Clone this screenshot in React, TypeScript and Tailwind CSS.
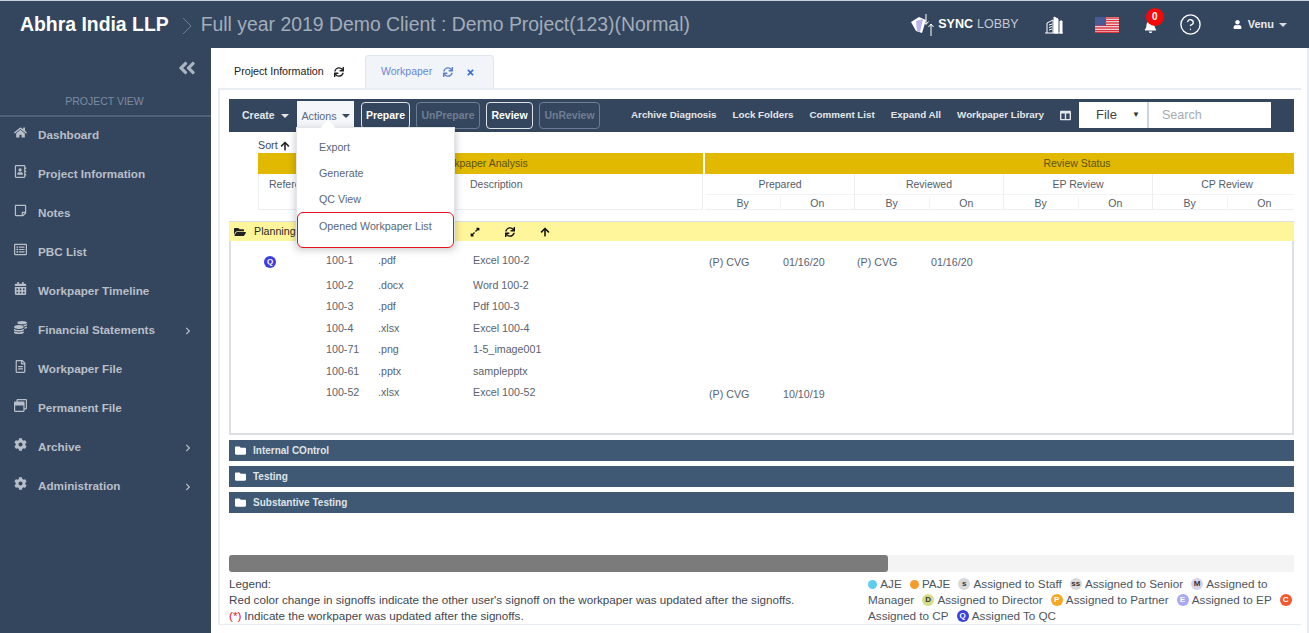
import {
  FaAngleDoubleLeft,
  FaArrowUp,
  FaBell,
  FaCalendarAlt,
  FaChevronRight,
  FaCoins,
  FaCog,
  FaColumns,
  FaExpandAlt,
  FaFolder,
  FaFolderOpen,
  FaHome,
  FaRegAddressBook,
  FaRegFileAlt,
  FaRegListAlt,
  FaRegStickyNote,
  FaRegWindowRestore,
  FaSync,
  FaTimes,
  FaUser,
} from "react-icons/fa"
import { CircleHelp } from "lucide-react"
import type { ReactNode } from "react"

const navItems = [
  { label: "Dashboard", icon: <FaHome /> },
  { label: "Project Information", icon: <FaRegAddressBook /> },
  { label: "Notes", icon: <FaRegStickyNote /> },
  { label: "PBC List", icon: <FaRegListAlt /> },
  { label: "Workpaper Timeline", icon: <FaCalendarAlt /> },
  { label: "Financial Statements", icon: <FaCoins />, arrow: true },
  { label: "Workpaper File", icon: <FaRegFileAlt /> },
  { label: "Permanent File", icon: <FaRegWindowRestore /> },
  { label: "Archive", icon: <FaCog />, arrow: true },
  { label: "Administration", icon: <FaCog />, arrow: true },
]

const rows = [
  { ref: "100-1", ext: ".pdf", desc: "Excel 100-2", q: true, by: "(P) CVG", on: "01/16/20", rby: "(P) CVG", ron: "01/16/20" },
  { ref: "100-2", ext: ".docx", desc: "Word 100-2" },
  { ref: "100-3", ext: ".pdf", desc: "Pdf 100-3" },
  { ref: "100-4", ext: ".xlsx", desc: "Excel 100-4" },
  { ref: "100-71", ext: ".png", desc: "1-5_image001" },
  { ref: "100-61", ext: ".pptx", desc: "samplepptx" },
  { ref: "100-52", ext: ".xlsx", desc: "Excel 100-52", by: "(P) CVG", on: "10/10/19" },
]

function Caret({ className = "border-t-white" }: { className?: string }) {
  return <span className={`inline-block w-0 h-0 border-x-4 border-x-transparent border-t-4 ${className}`} />
}

function Badge({ letter, className }: { letter: string; className: string }) {
  return (
    <span className={`inline-flex items-center justify-center w-3 h-3 rounded-full text-[8px] font-bold leading-none ${className}`}>
      {letter}
    </span>
  )
}

function Sidebar() {
  return (
    <aside className="w-[211px] shrink-0 bg-[#34465e] flex flex-col">
      <div className="h-[35px] flex items-center justify-end pr-[14px] pt-[4px] text-[#aab4c1] text-[20px]">
        <FaAngleDoubleLeft />
      </div>
      <div className="h-[34px] border-b-2 border-[#4d6079] text-center text-[10.500px] text-[#7c8ca1] pt-[12px] pr-[2px] leading-[13px]">
        PROJECT VIEW
      </div>
      <nav>
        {navItems.map((item) => (
          <div key={item.label} className="h-[39px] flex items-center pl-[13px] pb-[3px] text-[#b9bfc8] relative">
            <span className="w-[14px] text-[13px] -mt-[6px] flex justify-center">{item.icon}</span>
            <span className="ml-[11px] text-[11.700px] font-bold">{item.label}</span>
            {item.arrow && <FaChevronRight className="absolute left-[184px] top-[15px] text-[8px]" />}
          </div>
        ))}
      </nav>
    </aside>
  )
}

function Header() {
  return (
    <header className="h-[48px] shrink-0 bg-[#34465e] border-t border-[#c9d0d9] flex items-center text-white">
      <div className="ml-[20px] text-[19.400px] font-bold">Abhra India LLP</div>
      <svg className="ml-[13px] mt-[2px]" width="10" height="18" viewBox="0 0 10 18" fill="none" stroke="#6f7f93">
        <path d="M1 1l8 8-8 8" />
      </svg>
      <div className="ml-[9px] text-[19.400px] text-[#a3adb9]">Full year 2019 Demo Client : Demo Project(123)(Normal)</div>
      <div className="ml-auto flex items-center">
        <svg width="26" height="22" viewBox="0 0 26 22">
          <path d="M1 8l8-5 7 3-4 13-6-2z" fill="#fff" />
          <path d="M6 7l7-2-3 13-3-1z" fill="#b9b4ee" />
          <path d="M16 0v10M13.5 7.5l2.5 3 2.5-3M21 22v-12M18.5 13l2.5-3 2.5 3" stroke="#fff" fill="none" />
        </svg>
        <span className="ml-[2px] text-[12.500px] font-bold">SYNC</span>
        <span className="ml-[4px] text-[12.500px] text-[#c3c9d1] font-light">LOBBY</span>
        <svg className="ml-[25px]" width="20" height="18" viewBox="0 0 20 18" fill="none" stroke="#fff">
          <path d="M1 17h18M3 17V7l6-3v13M5 9l3-1M5 11.500l3-1M5 14l3-1" />
          <path d="M10 17V1l4 2v14zM16 17V5h2v12z" fill="#fff" />
        </svg>
        <svg className="ml-[31px]" width="24" height="16" viewBox="0 0 24 16">
          <rect width="24" height="16" fill="#fff" />
          <path d="M0 1h24M0 3.500h24M0 6h24M0 8.500h24M0 11h24M0 13.500h24M0 15.500h24" stroke="#d8343f" strokeWidth="1.300" />
          <rect width="11" height="8.500" fill="#4a5a94" />
        </svg>
        <div className="ml-[25px] relative w-[14px] h-[16px] mt-[6px]">
          <FaBell className="text-[13px]" />
          <span className="absolute -top-[12px] left-[2px] w-[18px] h-[18px] rounded-full bg-[#f50808] text-[10px] font-bold flex items-center justify-center">
            0
          </span>
        </div>
        <CircleHelp className="ml-[21px] w-[23px] h-[23px]" strokeWidth={1.400} />
        <FaUser className="ml-[31px] text-[9px]" />
        <span className="ml-[6px] text-[11px] font-bold text-[#e6e9ed]">Venu</span>
        <Caret className="ml-[5px] mr-[22px] border-t-[#d8dce2]" />
      </div>
    </header>
  )
}

function Tabs() {
  return (
    <div className="h-[40px] flex items-end pl-[1px]">
      <div className="w-[146px] h-[33px] pl-[15px] flex items-center text-[10.700px] text-[#222]">
        Project Information
        <FaSync className="ml-[10px] text-[10px] text-[#222]" />
      </div>
      <div className="w-[129px] h-[33px] rounded-t-[4px] border border-b-0 border-[#e0e6ee] bg-[#f1f5f9] pl-[15px] flex items-center text-[10.500px] text-[#6a86d8]">
        Workpaper
        <FaSync className="ml-[11px] text-[10px] text-[#5b7fd2]" />
        <FaTimes className="ml-[13px] text-[9px] text-[#3f6fd0]" />
      </div>
    </div>
  )
}

function OutlineBtn({ label, width, off }: { label: string; width: string; off?: boolean }) {
  return (
    <div
      className={`h-[27px] rounded-[4px] border flex items-center justify-center text-[10.500px] font-bold ${width} ${
        off ? "border-[#6d7c90] text-[#6f7e92]" : "border-[#dfe3e8] text-white"
      }`}
    >
      {label}
    </div>
  )
}

function Toolbar() {
  return (
    <div className="h-[33px] bg-[#34465e] flex pt-[3px] relative text-[9.800px]">
      <div className="w-[68px] pl-[13px] h-[27px] flex items-center font-bold text-[#e3e6ea] text-[10.500px]">
        Create
        <Caret className="ml-[6px]" />
      </div>
      <div className="w-[57px] h-[30px] bg-[#f4f6f9] flex items-center justify-center text-[#5a6a80] -mt-[1px] text-[10.700px]">
        Actions
        <Caret className="ml-[5px] border-t-[#34465e]" />
      </div>
      <div className="ml-[7px] flex gap-[6px]">
        <OutlineBtn label="Prepare" width="w-[49px]" />
        <OutlineBtn label="UnPrepare" width="w-[64px]" off />
        <OutlineBtn label="Review" width="w-[47px]" />
        <OutlineBtn label="UnReview" width="w-[61px]" off />
      </div>
      <div className="ml-[31px] h-[27px] flex items-center gap-[16px] font-bold text-[#e3e6ea]">
        <span>Archive Diagnosis</span>
        <span>Lock Folders</span>
        <span>Comment List</span>
        <span>Expand All</span>
        <span>Workpaper Library</span>
        <FaColumns className="text-[11px]" />
      </div>
      <div className="absolute left-[850px] top-[3px] flex h-[26px]">
        <div className="w-[70px] bg-white border-r-2 border-[#c8d7e6] pl-[17px] pr-[7px] flex items-center justify-between text-[13px] text-[#444]">
          File
          <span className="text-[8px] text-[#333]">▼</span>
        </div>
        <div className="w-[122px] bg-white pl-[13px] flex items-center text-[12.500px] text-[#a5abb3]">Search</div>
      </div>
    </div>
  )
}

function ActionsMenu() {
  return (
    <div className="absolute left-[67px] top-[28px] w-[159px] h-[119px] bg-white border border-[#e2e6eb] shadow-[0_3px_8px_rgba(0,0,0,0.25)] text-[10.700px] text-[#5a6778] z-10">
      <div className="absolute -top-[6px] left-[26px] w-[10px] h-[10px] rotate-45 bg-white" />
      <div className="relative pt-[6px]">
        <div className="h-[26px] pl-[22px] flex items-center">Export</div>
        <div className="h-[26px] pl-[22px] flex items-center">Generate</div>
        <div className="h-[26px] pl-[22px] flex items-center">QC View</div>
      </div>
      <div className="h-[36px] border-[1.500px] border-[#e4121d] rounded-[6px] pl-[21px] pb-[8px] flex items-center bg-white">
        Opened Workpaper List
      </div>
    </div>
  )
}

function ColumnHeaders() {
  const groups = ["Prepared", "Reviewed", "EP Review", "CP Review"]
  return (
    <div className="ml-[29px] flex gap-[2px] text-[10.500px] text-[#555d68]">
      <div className="w-[445px] h-[57px] border border-t-0 border-[#eceff2]">
        <div className="h-[21px] bg-[#e0b900] flex items-center justify-center pl-[2px] -mx-[1px] text-[#5e5216]">Workpaper Analysis</div>
        <div className="flex pt-[3px]">
          <div className="w-[211px] pl-[10px]">Reference</div>
          <div>Description</div>
        </div>
      </div>
      <div className="w-[589px] overflow-hidden">
        <div className="w-[744px] h-[21px] bg-[#e0b900] flex items-center justify-center text-[#5e5216]">Review Status</div>
        <div className="flex w-[600px] h-[36px] pl-[1px] border-b border-[#eceff2]">
          {groups.map((g) => (
            <div key={g} className="w-[149px] shrink-0 border-r border-[#eceff2]">
              <div className="h-[19px] mt-[2px] border-b border-[#f1f3f5] flex items-center justify-center">{g}</div>
              <div className="flex h-[15px] pt-[2px]">
                <div className="flex-1 flex items-center justify-center border-r border-[#f1f3f5]">By</div>
                <div className="flex-1 flex items-center justify-center">On</div>
              </div>
            </div>
          ))}
        </div>
      </div>
    </div>
  )
}

function WorkpaperRows() {
  return (
    <div className="h-[194px] border-x-2 border-b-2 border-[#dcdfe3] pt-[6px] text-[10.700px] text-[#5a6270]">
      {rows.map((r, i) => (
        <div key={r.ref} className={`flex ${i === 0 ? "h-[25.500px] pt-[5px]" : "h-[21.400px] pt-[4.500px]"}`}>
          <div className="w-[95px] pl-[33px]">{r.q && <Badge letter="Q" className="bg-[#3c3fe0] text-white -mt-[1px]" />}</div>
          <div className="w-[52px]">{r.ref}</div>
          <div className="w-[95px]">{r.ext}</div>
          <div className="w-[236px]">{r.desc}</div>
          <div className="w-[74px] pt-[2px]">{r.by}</div>
          <div className="w-[74px] pt-[2px]">{r.on}</div>
          <div className="w-[74px] pt-[2px]">{r.rby}</div>
          <div className="w-[74px] pt-[2px]">{r.ron}</div>
        </div>
      ))}
    </div>
  )
}

function FolderBar({ label }: { label: string }) {
  return (
    <div className="h-[21px] bg-[#3f5873] flex items-center pl-[6px] text-[10px] font-bold text-[#dfe4ea]">
      <FaFolder className="text-[11px] text-white mr-[7px]" />
      {label}
    </div>
  )
}

function LegendRow({ children }: { children: ReactNode }) {
  return <div className="h-[16px] flex items-center whitespace-nowrap">{children}</div>
}

function Legend() {
  return (
    <div className="flex mt-[4px] text-[11.650px] text-[#3f4650]">
      <div className="w-[639px]">
        <LegendRow>Legend:</LegendRow>
        <LegendRow>Red color change in signoffs indicate the other user's signoff on the workpaper was updated after the signoffs.</LegendRow>
        <LegendRow>
          <span className="text-[#e4121d] mr-[3px]">(*)</span>Indicate the workpaper was updated after the signoffs.
        </LegendRow>
      </div>
      <div className="flex-1 text-[#4d5560] text-[11.700px]">
        <LegendRow>
          <Badge letter="" className="bg-[#5fcdf0] !w-[9px] !h-[9px]" />&nbsp;AJE
          <Badge letter="" className="bg-[#f79b2e] !w-[9px] !h-[9px] ml-[8px]" />&nbsp;PAJE
          <Badge letter="s" className="bg-[#d9d9d9] text-[#333] ml-[8px]" />&nbsp;Assigned to Staff
          <Badge letter="ss" className="bg-[#d9d9d9] text-[#333] ml-[8px]" />&nbsp;Assigned to Senior
          <Badge letter="M" className="bg-[#d5d3ee] text-[#333] ml-[8px]" />&nbsp;Assigned to
        </LegendRow>
        <LegendRow>
          Manager
          <Badge letter="D" className="bg-[#d7dc8a] text-[#333] ml-[8px]" />&nbsp;Assigned to Director
          <Badge letter="P" className="bg-[#f7a823] text-white ml-[8px]" />&nbsp;Assigned to Partner
          <Badge letter="E" className="bg-[#aaa8f5] text-white ml-[8px]" />&nbsp;Assigned to EP
          <Badge letter="C" className="bg-[#f4582f] text-white ml-[8px]" />
        </LegendRow>
        <LegendRow>
          Assigned to CP
          <Badge letter="Q" className="bg-[#3c3fe0] text-white ml-[8px]" />&nbsp;Assigned To QC
        </LegendRow>
      </div>
    </div>
  )
}

export default function App() {
  return (
    <div className="w-[1309px] h-[633px] overflow-hidden flex flex-col bg-white font-['Liberation_Sans',Arial,sans-serif]">
      <Header />
      <div className="flex flex-1 min-h-0">
        <Sidebar />
        <main className="flex-1 min-w-0 pl-[7px] pr-[6px] border-r-[2px] border-[#e6ecf3]">
          <Tabs />
          <div className="h-[537px] border-2 border-b border-r-0 border-[#e8edf3] pl-[9px] pr-[7px] pt-[9px]">
            <div className="relative">
              <Toolbar />
              <ActionsMenu />
              <div className="h-[21px] ml-[29px] pt-[6px] flex items-center text-[10.700px] text-[#3f4650]">
                Sort <FaArrowUp className="ml-[2px] text-[10px] text-[#222]" />
              </div>
              <ColumnHeaders />
              <div className="mt-[11px] h-[20px] bg-[#fff59a] border-t border-[#dcdfe3] flex items-center pl-[5px] text-[10.700px] text-[#2c2c1a] relative">
                <FaFolderOpen className="text-[12px] text-[#222] mr-[8px]" />
                Planning
                <div className="absolute left-[241px] flex items-center gap-[25px] text-[10px] text-[#111]">
                  <FaExpandAlt />
                  <FaSync />
                  <FaArrowUp />
                </div>
              </div>
              <WorkpaperRows />
              <div className="mt-[5px] flex flex-col gap-[5px]">
                <FolderBar label="Internal COntrol" />
                <FolderBar label="Testing" />
                <FolderBar label="Substantive Testing" />
              </div>
              <div className="mt-[42px] h-[17px] bg-[#f4f4f4]">
                <div className="w-[659px] h-full bg-[#7b7b7b] rounded-[3px]" />
              </div>
              <Legend />
            </div>
          </div>
        </main>
      </div>
    </div>
  )
}
